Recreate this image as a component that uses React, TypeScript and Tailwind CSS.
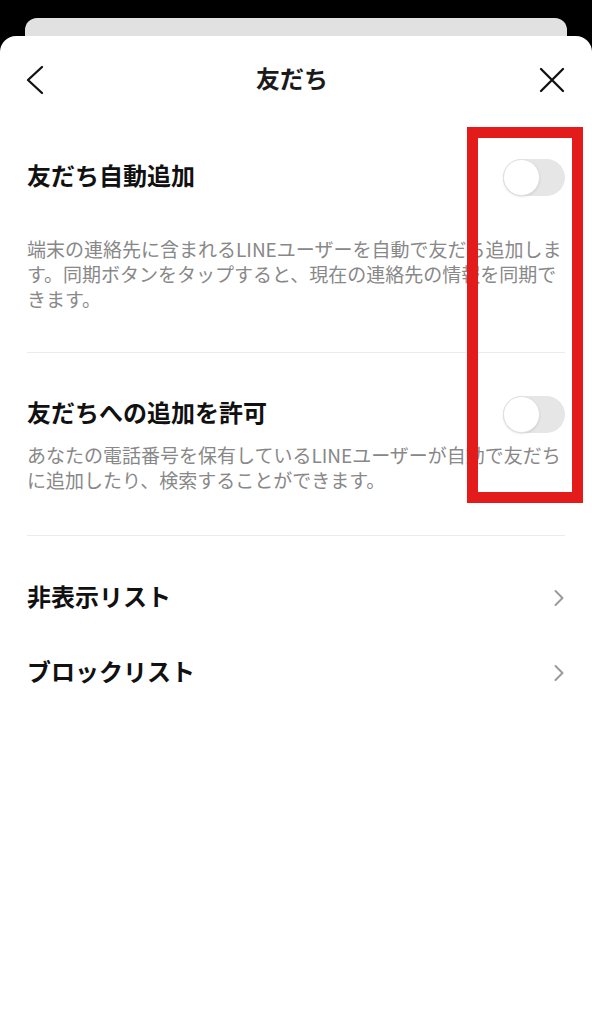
const font = { fontFamily: '"Noto Sans CJK JP", "Noto Sans", sans-serif' };

const Toggle = () => (
  <div className="relative h-[37px] w-[62px] rounded-full bg-[#e6e6e6]">
    <div className="absolute left-0 top-0 h-[37px] w-[37px] rounded-full border border-[#e0e0e0] bg-white shadow-[0_1px_2px_rgba(0,0,0,0.1)]" />
  </div>
);

const Chevron = () => (
  <svg width="12" height="18" viewBox="0 0 12 18" fill="none">
    <polyline points="2.5,2 9.5,9 2.5,16" stroke="#9a9a9a" strokeWidth="2" strokeLinecap="round" strokeLinejoin="round" />
  </svg>
);

export default function App() {
  return (
    <div className="relative min-h-[1024px] w-full bg-black" style={font}>
      {/* stacked card behind */}
      <div className="h-[36px] pt-[18px]">
        <div className="mx-[25px] h-[18px] rounded-t-[12px] bg-[#e1e1e1]" />
      </div>

      <div className="min-h-[988px] rounded-t-[16px] bg-white">
        {/* header */}
        <div className="flex h-[88px] items-center justify-between px-[26px]">
          <svg width="20" height="30" viewBox="0 0 20 30" fill="none">
            <polyline points="16,2 2,15 16,28" stroke="#111" strokeWidth="2.3" strokeLinecap="round" strokeLinejoin="round" />
          </svg>
          <div className="pb-[4px] text-[24px] font-semibold text-[#1a1a1a]">友だち</div>
          <svg width="28" height="28" viewBox="0 0 28 28" fill="none">
            <path d="M3 3 L25 25 M25 3 L3 25" stroke="#111" strokeWidth="2.3" strokeLinecap="round" />
          </svg>
        </div>

        <div className="px-[27px]">
          {/* section 1 */}
          <div className="pt-[35px] pb-[41px]">
            <div className="flex h-[37px] items-center justify-between">
              <div className="pb-[5px] text-[24px] font-semibold text-[#111]">友だち自動追加</div>
              <Toggle />
            </div>
            <p className="mt-[40px] text-[19px] leading-[25px] text-[#888]">
              端末の連絡先に含まれるLINEユーザーを自動で友だち追加しま
              <br />
              す。同期ボタンをタップすると、現在の連絡先の情報を同期で
              <br />
              きます。
            </p>
          </div>
          <div className="h-px bg-[#ececec]" />

          {/* section 2 */}
          <div className="pt-[43px] pb-[43px]">
            <div className="flex h-[37px] items-center justify-between">
              <div className="pb-[5px] text-[24px] font-semibold text-[#111]">友だちへの追加を許可</div>
              <Toggle />
            </div>
            <p className="mt-[9px] text-[19px] leading-[25px] text-[#888]">
              あなたの電話番号を保有しているLINEユーザーが自動で友だち
              <br />
              に追加したり、検索することができます。
            </p>
          </div>
          <div className="h-px bg-[#ececec]" />

          {/* list */}
          <div className="pt-[24px]">
            <div className="flex h-[75px] items-center justify-between">
              <div className="pb-[4px] text-[24px] font-semibold text-[#111]">非表示リスト</div>
              <Chevron />
            </div>
            <div className="flex h-[75px] items-center justify-between">
              <div className="pb-[4px] text-[24px] font-semibold text-[#111]">ブロックリスト</div>
              <Chevron />
            </div>
          </div>
        </div>
      </div>

      {/* annotation */}
      <div className="absolute left-[467px] top-[127px] h-[376px] w-[116px] border-[11px] border-[#e31b1b]" />
    </div>
  );
}
